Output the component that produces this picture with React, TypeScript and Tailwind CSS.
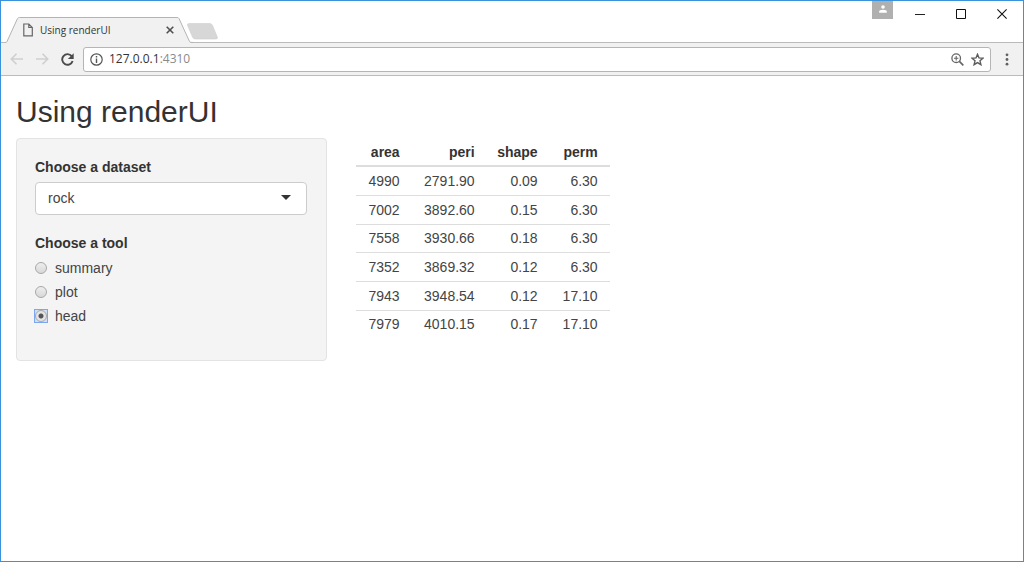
import { useState } from 'react';

const rows = [
  ['4990', '2791.90', '0.09', '6.30'],
  ['7002', '3892.60', '0.15', '6.30'],
  ['7558', '3930.66', '0.18', '6.30'],
  ['7352', '3869.32', '0.12', '6.30'],
  ['7943', '3948.54', '0.12', '17.10'],
  ['7979', '4010.15', '0.17', '17.10'],
];

const tools = ['summary', 'plot', 'head'];

function TitleBar() {
  return (
    <header className="flex h-[42px] justify-between border-b border-[#bbbbbb] pr-px pl-1">
      <div className="flex items-end">
        {/* active tab */}
        <div className="relative -mb-px flex h-[26px] w-[188px] items-center pr-[18px] pl-[18px]">
          <svg className="absolute inset-0" width="188" height="26" viewBox="0 0 188 26" aria-hidden="true">
            <path d="M0 26 L1.5 25.5 L12.5 1.5 Q13 .5 14.5 .5 H172 Q173.5 .5 174 1.5 L185 25.5 L188 26 Z" fill="#f1f1f1" />
            <path d="M0 25.5 Q1.5 25.5 2 24.5 L12.5 1.5 Q13 .5 14.5 .5 H172 Q173.5 .5 174 1.5 L184.5 24.5 Q185 25.5 188 25.5" fill="none" stroke="#b4b4b4" />
          </svg>
          <svg className="relative" width="10" height="14" viewBox="0 0 10 14" fill="none" stroke="#666" aria-hidden="true">
            <path d="M.8 1 H5.8 L9.3 4.5 V12.8 H.8 Z M5.8 1 V4.5 H9.3" strokeWidth="1.2" />
          </svg>
          <span className="relative ml-[7px] flex-1 text-[10px] text-[#333]">Using renderUI</span>
          <button className="relative p-px" aria-label="Close tab">
            <svg width="8" height="8" viewBox="0 0 8 8" stroke="#505050" strokeWidth="1.6">
              <path d="M.7 .7 L7.3 7.3 M7.3 .7 L.7 7.3" />
            </svg>
          </button>
        </div>
        <button className="mb-[2px] -ml-[6px]" aria-label="New tab">
          <svg width="31" height="17" viewBox="0 0 31 17">
            <path d="M2 .5 H22.5 Q24.5 .5 25.3 2 L30.3 14 Q31 16 28.5 16 H8.5 Q6.5 16 5.7 14.5 L.6 2.5 Q0 .5 2 .5 Z" fill="#d7d7d7" stroke="#cecece" strokeWidth=".6" />
          </svg>
        </button>
      </div>

      {/* window buttons */}
      <div className="flex items-start">
        <button className="mr-[7px] flex h-[18px] w-[21px] justify-center bg-[#b0b0b0] pt-1" aria-label="Profile">
          <svg width="8" height="8" viewBox="0 0 8 8" fill="#fff">
            <circle cx="4" cy="2" r="1.8" />
            <path d="M.2 7.8 V6.5 Q.2 4.8 4 4.8 T7.8 6.5 V7.8 Z" />
          </svg>
        </button>
        <button className="flex h-[25px] w-10 items-center justify-center" aria-label="Minimize">
          <svg width="10" height="10" viewBox="0 0 10 10" stroke="#222">
            <path d="M0 5.5 H10" />
          </svg>
        </button>
        <button className="flex h-[25px] w-[41px] items-center justify-center" aria-label="Maximize">
          <svg width="10" height="10" viewBox="0 0 10 10" fill="none" stroke="#111">
            <path d="M.5 .5 H9.5 V9.5 H.5 Z" />
          </svg>
        </button>
        <button className="flex h-[25px] w-[41px] items-center justify-center" aria-label="Close">
          <svg width="10" height="10" viewBox="0 0 10 10" stroke="#111" strokeWidth="1.1">
            <path d="M.4 .4 L9.6 9.6 M9.6 .4 L.4 9.6" />
          </svg>
        </button>
      </div>
    </header>
  );
}

function Toolbar() {
  return (
    <nav className="flex h-[33px] items-center border-b border-[#bbbbbb] bg-[#f1f1f1] pr-[14px] pl-[9px]">
      <button aria-label="Back">
        <svg width="14" height="12" viewBox="0 0 14 12" fill="none" stroke="#cfcfcf" strokeWidth="1.6">
          <path d="M13 6 H1.5 M6.5 .8 L1.3 6 L6.5 11.2" />
        </svg>
      </button>
      <button className="ml-[11px]" aria-label="Forward">
        <svg width="14" height="12" viewBox="0 0 14 12" fill="none" stroke="#cfcfcf" strokeWidth="1.6">
          <path d="M1 6 H12.5 M7.5 .8 L12.7 6 L7.5 11.2" />
        </svg>
      </button>
      <button className="ml-3" aria-label="Reload">
        <svg width="13" height="13" viewBox="0 0 13 13">
          <path d="M10.7 3.2 A5.3 5.3 0 1 0 11.6 8" fill="none" stroke="#4a4a4a" strokeWidth="1.9" />
          <path d="M12.7 .2 V6 H6.9 Z" fill="#4a4a4a" />
        </svg>
      </button>
      <div className="ml-[9px] flex h-[25px] flex-1 items-center rounded-[3px] border border-[#b5b5b5] bg-white px-[6px]">
        <svg width="13" height="13" viewBox="0 0 13 13" aria-hidden="true">
          <circle cx="6.5" cy="6.5" r="5.7" fill="none" stroke="#555" strokeWidth="1.2" />
          <path d="M5.8 3 H7.2 V4.4 H5.8 Z M5.8 5.5 H7.2 V10 H5.8 Z" fill="#555" />
        </svg>
        <a href="#" className="ml-[6px] flex-1 text-[12px] text-[#333]">
          127.0.0.1<span className="text-[#8a8a8a]">:4310</span>
        </a>
        <button aria-label="Zoom">
          <svg width="13" height="13" viewBox="0 0 13 13" fill="none" stroke="#666" strokeWidth="1.3">
            <circle cx="5.2" cy="5.2" r="4.3" />
            <path d="M8.4 8.4 L12.3 12.3" strokeWidth="1.7" />
            <path d="M3 5.2 H7.4 M5.2 3 V7.4" strokeWidth="1.1" />
          </svg>
        </button>
        <button className="ml-[7px]" aria-label="Bookmark this page">
          <svg width="13" height="13" viewBox="0 0 13 13" fill="none" stroke="#5c5c5c" strokeWidth="1.4">
            <path d="M6.5 1.3 L8 4.9 L12 5.2 L9 7.8 L9.9 11.7 L6.5 9.6 L3.1 11.7 L4 7.8 L1 5.2 L5 4.9 Z" />
          </svg>
        </button>
      </div>
      <button className="ml-[14px]" aria-label="Menu">
        <svg width="4" height="13" viewBox="0 0 4 13" fill="#606060">
          <circle cx="2" cy="1.8" r="1.4" />
          <circle cx="2" cy="6.5" r="1.4" />
          <circle cx="2" cy="11.2" r="1.4" />
        </svg>
      </button>
    </nav>
  );
}

export default function App() {
  const [tool, setTool] = useState('head');

  return (
    <div className="min-h-screen border border-[#3a91dc] bg-white font-['Open_Sans','Noto_Sans',sans-serif]">
      <TitleBar />
      <Toolbar />

      <main className="pt-[18px] font-['Liberation_Sans',Arial,sans-serif] text-[14px] leading-5 text-[#444]">
        <h1 className="mb-2 px-[15px] text-[30px] leading-9 text-[#333]">Using renderUI</h1>

        <div className="flex">
          {/* sidebar */}
          <div className="w-1/3 px-[15px]">
            <form className="rounded border border-[#e3e3e3] bg-[#f4f4f4] pt-[18px] pr-[19px] pb-[34px] pl-[18px]">
              <label htmlFor="dataset" className="mb-[5px] block font-bold text-[#333]">
                Choose a dataset
              </label>
              <div className="relative">
                <select
                  id="dataset"
                  className="block h-[33px] w-full appearance-none rounded border border-[#cccccc] bg-white px-3 pb-[2px] text-[#444] outline-none"
                >
                  <option>rock</option>
                </select>
                <svg className="pointer-events-none absolute top-[13px] right-4" width="10" height="5" viewBox="0 0 10 5" fill="#333">
                  <path d="M0 0 H10 L5 5 Z" />
                </svg>
              </div>

              <fieldset className="mt-[18px]">
                <legend className="mb-[5px] font-bold text-[#333]">Choose a tool</legend>
                <div className="flex flex-col gap-1">
                  {tools.map((t) => (
                    <label key={t} className="flex items-center gap-2">
                      <span className="flex has-checked:bg-[#cfdff8] has-checked:outline has-checked:outline-[#7aa7f0]">
                        <input
                          type="radio"
                          name="tool"
                          value={t}
                          checked={tool === t}
                          onChange={() => setTool(t)}
                          className="size-3 appearance-none rounded-full border border-[#a8a8a8] bg-linear-to-b from-[#eeeeee] to-[#d8d8d8] outline-none checked:bg-[radial-gradient(circle,#555_0_2px,#e4e4e4_3px)]"
                        />
                      </span>
                      {t}
                    </label>
                  ))}
                </div>
              </fieldset>
            </form>
          </div>

          {/* result */}
          <div className="w-2/3 px-[14px]">
            <table className="border-collapse text-right">
              <thead>
                <tr className="h-7 border-b-2 border-[#dddddd] text-[#333]">
                  <th className="w-14 pr-3">area</th>
                  <th className="w-[75px] pr-3">peri</th>
                  <th className="w-[63px] pr-3">shape</th>
                  <th className="w-[60px] pr-3">perm</th>
                </tr>
              </thead>
              <tbody>
                {rows.map((row) => (
                  <tr key={row[1]} className="h-[29px] border-b border-[#dddddd] last:border-b-0 nth-[3n]:h-7">
                    {row.map((cell, i) => (
                      <td key={i} className="pr-3">{cell}</td>
                    ))}
                  </tr>
                ))}
              </tbody>
            </table>
          </div>
        </div>
      </main>
    </div>
  );
}
